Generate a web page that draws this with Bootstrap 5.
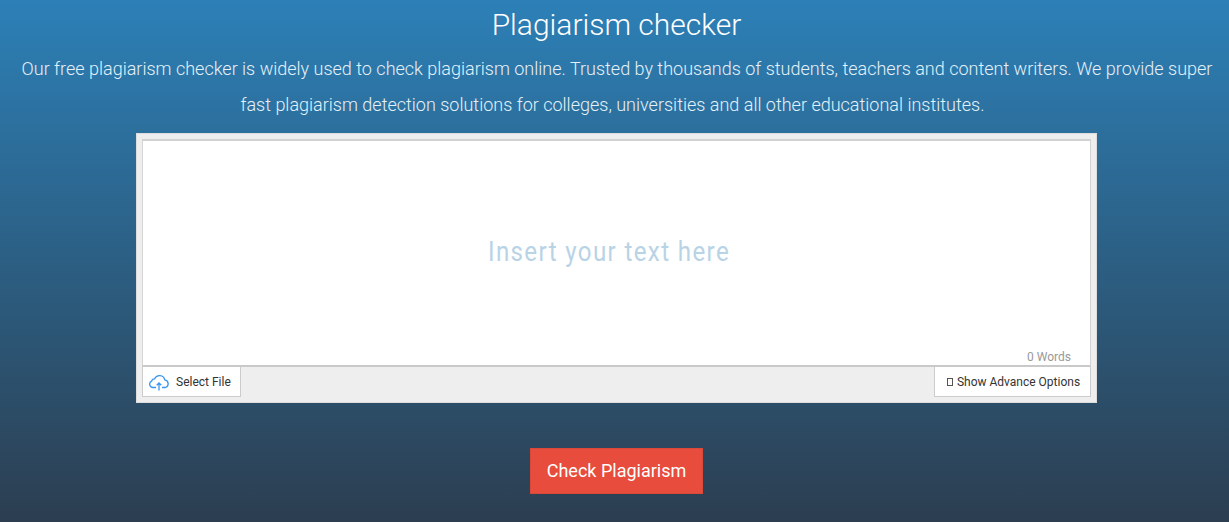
<!DOCTYPE html>
<html lang="en">
<head>
<meta charset="utf-8">
<title>Plagiarism checker</title>
<link rel="stylesheet" href="https://cdn.jsdelivr.net/npm/bootstrap@5.3.0/dist/css/bootstrap.min.css">
<style>
html,body{height:522px;overflow:hidden}
body{font-family:Roboto,sans-serif;background:linear-gradient(to bottom,#2c80b7 0,#2c3e50 100%);color:#fff}
.hero-title{font-size:30px;font-weight:300;line-height:36px;padding:7px 0 0 4px;margin:0 0 8px}
.hero-text{font-size:18px;font-weight:300;line-height:36px;color:#e4f1f9;width:1210px;margin:0 0 10px 7.500px;text-indent:9px}
.tool-box{width:961px;height:270px;margin-left:136px;background:#eee;border:1px solid #ddd;padding:5px}
.editor{height:228px;background:#fff;border:1px solid #d4d4d4;border-top:2px solid #d2d2d2;border-bottom:2px solid #c9c9c9;position:relative}
.ph-text{font-size:28px;letter-spacing:1.6px;color:#b9d3e6;font-weight:400;line-height:32px;transform:scaleX(.86);width:400px;text-align:center;position:absolute;left:266px;top:95px}
.word-count{position:absolute;right:19px;bottom:0;font-size:12px;line-height:16px;color:#999}
.tool-btn{height:30px;background:#fff;border:1px solid #ccc;border-top:0;border-radius:0;font-size:12px;color:#333;padding:0;display:flex;align-items:center}
.btn-file{width:99px;padding-left:6px;gap:6px}
.btn-adv{width:157px;justify-content:center;gap:4px;padding-left:2px}
.tofu{display:inline-block;width:6px;height:8px;border:1px solid #555}
.go-btn{width:173px;height:46px;background:#e74c3c;border:1px solid #d9493a;border-radius:0;color:#fff;font-size:18px;margin:45px 0 0 530px;padding:0 0 2px}
.go-btn:hover{background:#e74c3c;color:#fff}
</style>
</head>
<body>
<h1 class="hero-title text-center">Plagiarism checker</h1>
<p class="hero-text text-center">Our free plagiarism checker is widely used to check plagiarism online. Trusted by thousands of students, teachers and content writers. We provide super fast plagiarism detection solutions for colleges, universities and all other educational institutes.</p>
<div class="tool-box">
  <div class="editor">
    <div class="ph-text">Insert your text here</div>
    <div class="word-count">0 Words</div>
  </div>
  <div class="d-flex justify-content-between">
    <button class="btn tool-btn btn-file" type="button">
      <svg width="21" height="18" viewBox="0 0 21 18" fill="none" stroke="#3a96f0" stroke-width="1.300"><path d="M7 14.500H4A3.300 3.300 0 0 1 2.600 8.200 3 3 0 0 1 5.600 5.800 5.400 5.400 0 0 1 15.800 6.800 4 4 0 0 1 16.500 14.500H13"/><path d="M10 17.500V10M7.700 12.300 10 10l2.300 2.300"/></svg>
      <span>Select File</span>
    </button>
    <button class="btn tool-btn btn-adv" type="button"><span class="tofu"></span><span>Show Advance Options</span></button>
  </div>
</div>
<button class="btn go-btn d-block" type="button">Check Plagiarism</button>
<script src="https://cdn.jsdelivr.net/npm/bootstrap@5.3.0/dist/js/bootstrap.bundle.min.js"></script>
</body>
</html>
